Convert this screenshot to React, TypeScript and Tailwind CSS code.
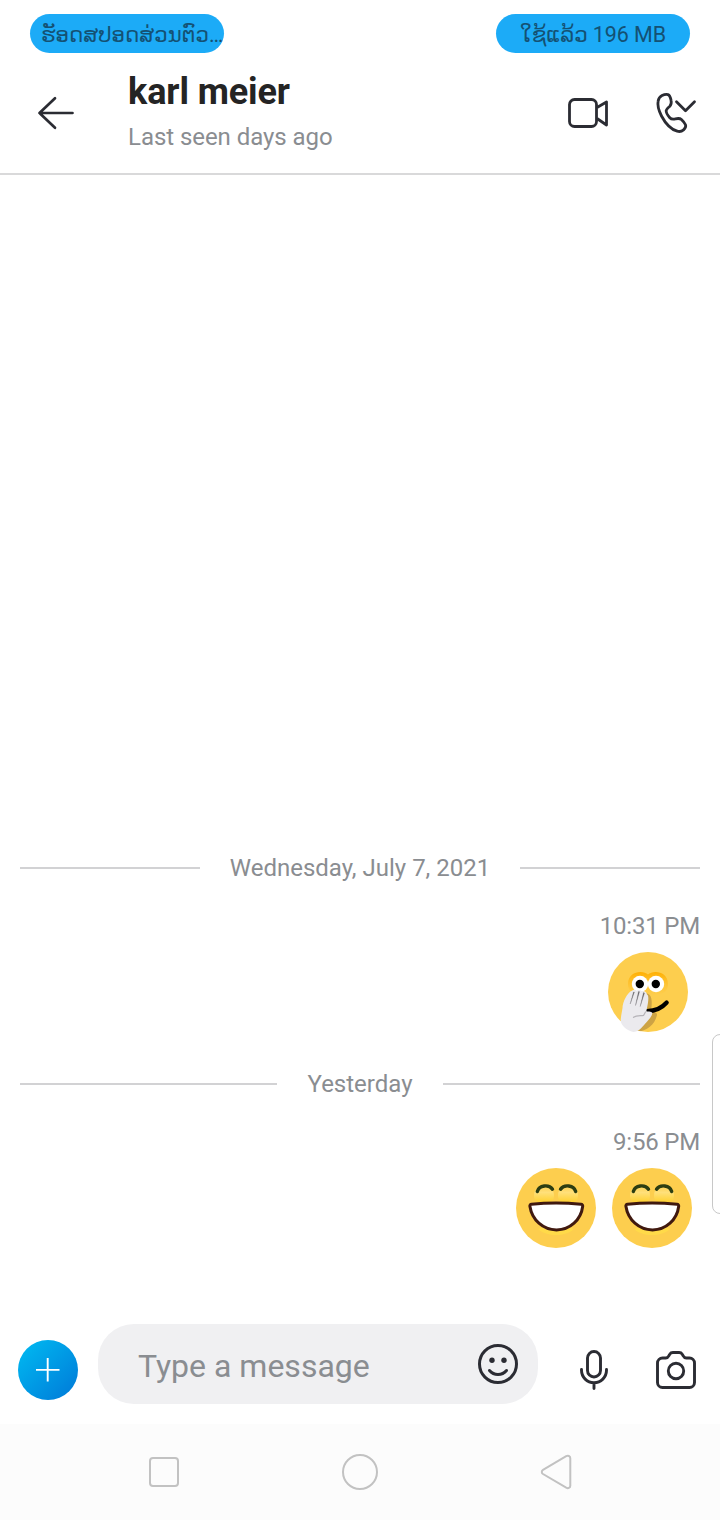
import React from 'react';

interface PillProps {
  children: React.ReactNode;
  className: string;
}

const StatusPill: React.FC<PillProps> = ({ children, className }) => (
  <div
    className={`flex h-[39px] w-[194px] items-center overflow-hidden whitespace-nowrap rounded-full bg-[#1cabf7] text-[#145173] ${className}`}
  >
    {children}
  </div>
);

const BackIcon = () => (
  <svg width="40" height="40" viewBox="0 0 40 40" fill="none" stroke="#2b2c33" strokeWidth="2.7" strokeLinecap="round" strokeLinejoin="round">
    <path d="M36.5 20H3.5M19 5.3 3.5 20 19 34.7" />
  </svg>
);

const VideoIcon = () => (
  <svg width="40" height="40" viewBox="0 0 40 40" fill="none" stroke="#2b2c33" strokeWidth="2.8" strokeLinejoin="round">
    <rect x="1.5" y="6.5" width="27" height="27" rx="5" />
    <path d="m29 14.5 9.5-5.5v23L29 25.5" />
  </svg>
);

const CallIcon = () => (
  <svg width="42" height="42" viewBox="0 0 42 42" fill="none" stroke="#2b2c33" strokeWidth="2.8" strokeLinecap="round" strokeLinejoin="round">
    <path d="M7 3.6c2-1 4.300-1.500 6-1 1.800.7 2.700 3.800 3.100 6 .5 2.400.3 4-1.300 5.600-1.600 1.500-3.400 2.500-3.600 4.300-.2 2 1.800 5.200 3.600 7.200 1.600 1.800 3.600 1.700 5.600 1.200 2.300-.6 4.300-.9 6 .7 1.800 1.700 3.200 3.200 4.100 5.200.8 2-.5 3.700-2 5.100-1.700 1.500-3.900 2-6.300 1.300-6.200-1.800-12-8.200-15.700-15.200C3.700 18.500 2.300 13.500 3.100 9.300c.4-2.500 1.700-4.600 3.900-5.700z" />
    <path d="m21.500 9.700 9 9 9-9" />
  </svg>
);

const SmileIcon = () => (
  <svg width="40" height="40" viewBox="0 0 40 40" fill="none" stroke="#2b2c33" strokeWidth="3" strokeLinecap="round">
    <circle cx="20" cy="20" r="18.5" />
    <path d="M11.5 26.5c4.5 5.300 12.500 5.300 17 0" />
    <circle cx="14" cy="16.3" r="2.7" fill="#2b2c33" stroke="none" />
    <circle cx="26" cy="16.3" r="2.7" fill="#2b2c33" stroke="none" />
  </svg>
);

const MicIcon = () => (
  <svg width="40" height="40" viewBox="0 0 40 40" fill="none" stroke="#2b2c33" strokeWidth="2.9" strokeLinecap="round">
    <rect x="13.5" y="1.5" width="13" height="25.5" rx="6.5" />
    <path d="M7.5 19.5v.8a12.5 12.5 0 0 0 25 0v-.8M20 33.5v5" />
  </svg>
);

const CameraIcon = () => (
  <svg width="40" height="40" viewBox="0 0 40 40" fill="none" stroke="#2b2c33" strokeWidth="2.9" strokeLinejoin="round">
    <path d="M6.5 8h3.2c2.7 0 2.6-1.7 4-3.7.8-1.2 1.7-1.8 3.2-1.8h6.2c1.5 0 2.4.6 3.2 1.8 1.4 2 1.3 3.7 4 3.7h3.200a5 5 0 0 1 5 5v19.500a5 5 0 0 1-5 5h-27a5 5 0 0 1-5-5V13a5 5 0 0 1 5-5z" />
    <circle cx="20" cy="21" r="7.7" />
  </svg>
);

const LaughEmoji = () => (
  <svg width="80" height="80" viewBox="0 0 80 80" fill="none">
    <defs>
      <linearGradient id="cheek" x1="0" y1="0" x2="0" y2="1">
        <stop offset="0" stopColor="#fdce4e" />
        <stop offset="0.4" stopColor="#ffe07a" />
        <stop offset="1" stopColor="#ffd02b" />
      </linearGradient>
    </defs>
    <circle cx="40" cy="40" r="40" fill="#fdce4e" />
    <path d="M18 28c0-7 4-10.5 10-10.5S38 21 38 28c0 5-4 7-10 7s-10-2-10-7z" fill="url(#cheek)" />
    <path d="M42 28c0-7 4-10.5 10-10.5S62 21 62 28c0 5-4 7-10 7s-10-2-10-7z" fill="url(#cheek)" />
    <path d="M22 61c9 8 27 8 36 0l-9-3H31z" fill="#ffda49" />
    <path d="M21.300 23.500c1.700-6.500 11.700-7.500 15.200-2.300M44.500 21.200c3.500-5.200 13.500-4.200 15.200 2.300" stroke="#2c3d12" strokeWidth="3.4" strokeLinecap="round" />
    <path d="M15.500 36.3c16-1.6 33-1.6 49.5 0 1.2.1 1.8.8 1.7 2C65 52 54 61.900 40.500 61.900S16 52 13.900 38.300c-.2-1.200.4-1.900 1.600-2z" fill="#fff" stroke="#40190f" strokeWidth="3" strokeLinejoin="round" />
  </svg>
);

const WhisperEmoji = () => (
  <svg width="80" height="80" viewBox="0 0 80 80" fill="none">
    <defs>
      <clipPath id="face">
        <circle cx="40" cy="40" r="40" />
      </clipPath>
      <linearGradient id="glow" x1="0" y1="0" x2="0" y2="1">
        <stop offset="0" stopColor="#ffaf00" />
        <stop offset="1" stopColor="#ffc943" stopOpacity="0.3" />
      </linearGradient>
    </defs>
    <circle cx="40" cy="40" r="40" fill="#fdce4e" />
    <path d="M40 22.5C35.5 18 20 18.5 20 32c0 7 5 10.5 12 10.5h16c7 0 12-3.5 12-10.5 0-13.5-15.5-14-20-9.5z" fill="url(#glow)" />
    <circle cx="32" cy="32" r="8.2" fill="#fff" />
    <circle cx="48" cy="32" r="8.2" fill="#fff" />
    <circle cx="31.8" cy="32" r="4.2" fill="#000" />
    <circle cx="47.8" cy="32" r="4.2" fill="#000" />
    <g clipPath="url(#face)">
      <path d="M37 41c6 0 8 6 6 17 4 3 6 2 6 5-2 9-9 16-21 17z" fill="#cda344" />
    </g>
    <path d="M37 59c9 .5 16.500-2.500 21.700-8.500" stroke="#000" strokeWidth="4.2" strokeLinecap="round" />
    <path d="M14.500 56c0-6 5-16 9.500-17.300 1.500-1.500 3.500-1 4.500 0 2-1.200 4-.8 5 .3 3.500-.5 5 1 5.500 3.500 2 1 1.800 6-.7 16.700 2.500.5 6 .1 6 2.300-.6 3-4 7-7 10-4 5-7 8-12 8.500-7-2-13.500-7.500-12.500-13 .3-4 1.200-7 1.700-11z" fill="#ebeaee" />
    <path d="m25.500 40-3.300 12 4.200-12zM30.500 39.500l-3 14 4-13.800zM35.500 40.500l-3.300 14 4.300-13.500z" fill="#4c4b4f" stroke="#88868b" strokeWidth="0.4" />
    <path d="M25.500 65.300c3-2.300 7-1.300 10-1.800l2-3.500" stroke="#b5b3b8" strokeWidth="1.2" strokeLinecap="round" />
  </svg>
);

const DateDivider = ({ label }: { label: string }) => (
  <div className="flex h-8 items-center gap-[30px] px-5">
    <div className="h-0.5 flex-1 bg-[#d2d2d4]" />
    <span>{label}</span>
    <div className="h-0.5 flex-1 bg-[#d2d2d4]" />
  </div>
);

const MessageTime = ({ time }: { time: string }) => (
  <div className="mt-[26px] h-8 pr-5 text-right tracking-[-0.2px]">{time}</div>
);

export default function App() {
  return (
    <div className="relative flex h-[1520px] w-[720px] flex-col overflow-hidden bg-white font-[Roboto,'DejaVu_Sans',sans-serif]">
      <div className="flex h-[53px] justify-between px-[30px] pt-3.5">
        <StatusPill className="pl-[11px] pt-0.5 text-[21.3px]">ຮັອດສປອດສ່ວນຕົວ…</StatusPill>
        <StatusPill className="justify-center pt-[3px] text-[21.5px] tracking-[-0.1px]">ໃຊ້ແລ້ວ 196 MB</StatusPill>
      </div>

      <header className="flex h-[122px] items-center border-b-2 border-[#d9d9da] pl-9 pr-[23px]">
        <button type="button" aria-label="Back">
          <BackIcon />
        </button>
        <div className="ml-[52px] flex-1">
          <h1 className="-mt-0.5 text-[36px] font-bold leading-[44px] tracking-[-0.1px] text-[#242424]">karl meier</h1>
          <p className="mt-[5px] text-2xl leading-9 tracking-[-0.05px] text-[#8a8d91]">Last seen days ago</p>
        </div>
        <div className="flex items-center gap-[47px]">
          <VideoIcon />
          <CallIcon />
        </div>
      </header>

      <main className="flex flex-1 flex-col justify-end pb-[66px] text-2xl leading-8 text-[#8a8d91]">
        <DateDivider label="Wednesday, July 7, 2021" />
        <MessageTime time="10:31 PM" />
        <div className="mb-9 mt-2.5 flex justify-end pr-8">
          <WhisperEmoji />
        </div>
        <DateDivider label="Yesterday" />
        <MessageTime time="9:56 PM" />
        <div className="mt-2.5 flex justify-end gap-4 pr-7">
          <LaughEmoji />
          <LaughEmoji />
        </div>
      </main>

      <footer className="flex h-[110px] items-start pl-[18px] pr-6 pt-2.5">
        <button
          type="button"
          aria-label="Add"
          className="mt-4 flex size-[60px] items-center justify-center rounded-full bg-linear-to-br from-[#00bcf2] to-[#0078d7]"
        >
          <svg width="24" height="24" viewBox="0 0 24 24" stroke="#fff" strokeWidth="1.9">
            <path d="M11.7 0v23.5M0 11.9h23.5" />
          </svg>
        </button>
        <div className="ml-5 flex h-20 w-[440px] items-center justify-between rounded-[36px] bg-[#f0f0f2] pl-10 pr-5">
          <span className="pt-1 text-[32px] leading-10 text-[#8a8d91]">Type a message</span>
          <SmileIcon />
        </div>
        <div className="ml-9 mt-[26px] flex gap-[42px]">
          <MicIcon />
          <CameraIcon />
        </div>
      </footer>

      <nav className="flex h-24 items-center justify-between bg-[#fcfcfc] px-36">
        <svg width="40" height="40" viewBox="0 0 40 40" fill="none" stroke="#c2c2c2" strokeWidth="2">
          <rect x="6" y="6" width="28" height="28" rx="3" />
        </svg>
        <svg width="40" height="40" viewBox="0 0 40 40" fill="none" stroke="#c2c2c2" strokeWidth="2">
          <circle cx="20" cy="20" r="17" />
        </svg>
        <svg width="40" height="40" viewBox="0 0 40 40" fill="none" stroke="#c2c2c2" strokeWidth="2">
          <path d="M7 17.9 30.2 4.2c1.8-1 4.1-.3 4.1 2v27.5c0 2.3-2.3 3-4.1 2L7 22c-1.6-1-1.6-3.1 0-4.1z" />
        </svg>
      </nav>

      {/* edge panel handle */}
      <div className="absolute -right-1 top-[1034px] h-[180px] w-3 rounded-l-lg border border-[#c8c8c8] bg-white" />
    </div>
  );
}
